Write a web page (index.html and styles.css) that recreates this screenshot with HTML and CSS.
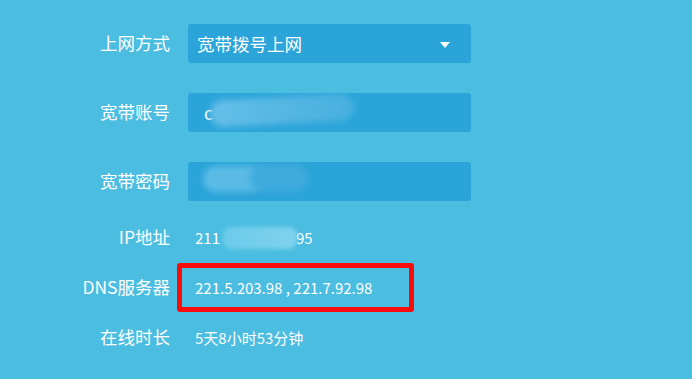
FILE: index.html
```html
<!DOCTYPE html>
<html lang="zh-CN">
<head>
    <meta charset="UTF-8">
    <title>WAN设置</title>
    <link rel="stylesheet" href="styles.css">
</head>
<body>
    <div class="wan-form">
        <div class="form-row">
            <label class="row-label">上网方式</label>
            <div class="field select-field">
                <span>宽带拨号上网</span>
                <span class="caret"></span>
            </div>
        </div>
        <div class="form-row">
            <label class="row-label">宽带账号</label>
            <div class="field">
                <span class="account-text">c</span>
                <div class="smudge smudge-account"></div>
            </div>
        </div>
        <div class="form-row">
            <label class="row-label">宽带密码</label>
            <div class="field">
                <div class="smudge smudge-pass-a"></div>
                <div class="smudge smudge-pass-b"></div>
            </div>
        </div>

        <div class="info-row">
            <span class="row-label">IP地址</span>
            <span class="info-value">211<span class="masked"></span>95
                <span class="smudge smudge-ip"></span>
            </span>
        </div>
        <div class="info-row">
            <span class="row-label">DNS服务器</span>
            <span class="info-value highlight">221.5.203.98 , 221.7.92.98</span>
        </div>
        <div class="info-row">
            <span class="row-label">在线时长</span>
            <span class="info-value">5天8小时53分钟</span>
        </div>
    </div>
</body>
</html>
```

FILE: styles.css
```css
body {
    margin: 0;
    background-color: #4bbde1;
    font-family: "Microsoft YaHei", "Noto Sans CJK SC", sans-serif;
    color: #fff;
    height: 379px;
    overflow: hidden;
}
.wan-form {
    padding-top: 24px;
}
.form-row {
    display: flex;
    align-items: center;
    height: 39px;
    margin-bottom: 30px;
}
.form-row:nth-child(3) {
    margin-bottom: 11px;
}
.row-label {
    width: 170px;
    text-align: right;
    font-size: 17.5px;
    flex-shrink: 0;
    margin-top: -2px;
}
.field {
    position: relative;
    margin-left: 18px;
    width: 283px;
    height: 39px;
    box-sizing: border-box;
    background-color: #2ba4d9;
    border-radius: 3px;
    padding: 0 9px;
    display: flex;
    align-items: center;
    font-size: 17.5px;
    overflow: hidden;
}
.select-field {
    justify-content: space-between;
    padding-right: 21px;
}
.account-text {
    margin-left: 7px;
}
.caret {
    width: 0;
    height: 0;
    border-left: 5px solid transparent;
    border-right: 5px solid transparent;
    border-top: 6px solid #fff;
    margin-top: 2px;
}
.info-row {
    display: flex;
    align-items: center;
    height: 50px;
}
.info-value {
    position: relative;
    margin-left: 7px;
    padding-left: 18px;
    font-size: 15px;
}
.masked {
    display: inline-block;
    width: 76px;
}
.highlight {
    box-sizing: border-box;
    width: 237px;
    height: 49px;
    display: flex;
    align-items: center;
    padding-left: 13px;
    border: 5px solid #fa0c0c;
    border-radius: 3px;
}

/* blurred-out private data */
.smudge {
    position: absolute;
    border-radius: 16px;
    filter: blur(3px);
}
.smudge-account {
    left: 22px;
    top: 4px;
    width: 144px;
    height: 27px;
    background: linear-gradient(100deg, #66c0e8, #52b5e2 60%, #47b0e0);
    transform: rotate(-3deg);
}
.smudge-pass-a {
    left: 15px;
    top: 4px;
    width: 62px;
    height: 26px;
    background: #5bbbe5;
}
.smudge-pass-b {
    left: 62px;
    top: 2px;
    width: 58px;
    height: 28px;
    background: #3eaadd;
}
.smudge-ip {
    left: 46px;
    top: 0;
    width: 74px;
    height: 22px;
    background: linear-gradient(90deg, #6ccbea, #80d2ee);
    border-radius: 8px;
    filter: blur(2px);
}
```
